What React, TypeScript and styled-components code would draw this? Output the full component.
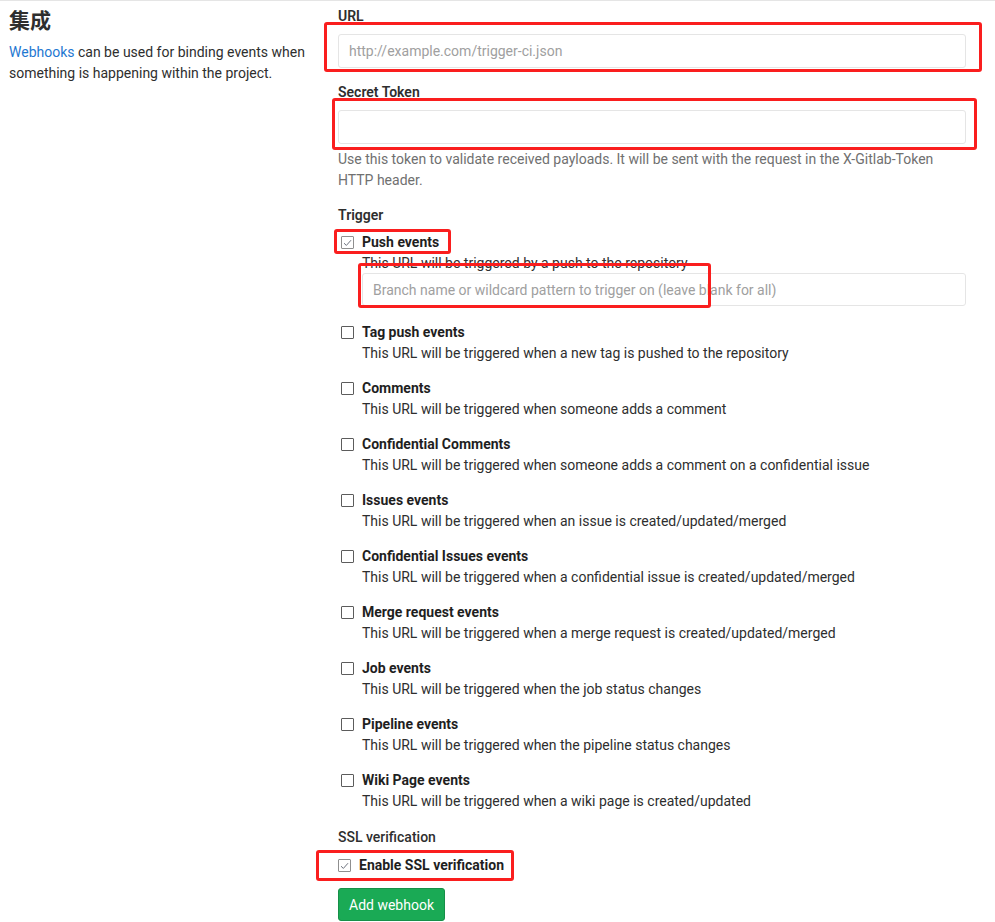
import styled, { createGlobalStyle } from 'styled-components';

const GlobalStyle = createGlobalStyle`
  body {
    margin: 0;
    background: #fff;
    font-family: Roboto, "Noto Sans CJK SC", sans-serif;
    font-size: 14px;
    color: #2e2e2e;
  }
`;

const Page = styled.div`
  display: grid;
  grid-template-columns: 311px 628px;
  column-gap: 18px;
  padding: 0 0 0 9px;
  border-top: 1px solid #e5e5e5;
  height: 921px;
  overflow: hidden;
`;

const Intro = styled.div`
  padding-top: 4px;
`;

const Title = styled.h4`
  margin: 0 0 9px;
  font-size: 21px;
  line-height: 28px;
  font-weight: 700;
  font-family: "Noto Sans CJK SC", sans-serif;
  color: #2e2e2e;
`;

const Lead = styled.p`
  margin: 0;
  line-height: 21px;
  color: #2e2e2e;
`;

const Link = styled.a`
  color: #1f78d1;
  text-decoration: none;
`;

const Form = styled.div`
  display: flex;
  flex-direction: column;
  padding-top: 5px;
`;

const Group = styled.div`
  margin-bottom: 14px;
`;

const Label = styled.div<{ $weight?: number; $gap?: number }>`
  font-weight: ${p => p.$weight ?? 600};
  line-height: 20px;
  margin-bottom: ${p => p.$gap ?? 8}px;
`;

const Field = styled.div`
  position: relative;
`;

const Input = styled.input<{ $tall?: boolean }>`
  display: block;
  box-sizing: border-box;
  width: 100%;
  height: ${p => (p.$tall ? 34 : 33)}px;
  padding: 6px 10px;
  border: 1px solid #e5e5e5;
  border-radius: 3px;
  font-family: inherit;
  font-size: 14px;
  color: #2e2e2e;
  background: #fff;
  outline: none;
  &::placeholder {
    color: #a0a0a0;
  }
`;

const Help = styled.p`
  margin: 5px 0 0;
  line-height: 21px;
  color: #707070;
`;

const Highlight = styled.span<{ $top: number; $left: number; $w: number; $h: number }>`
  position: absolute;
  top: ${p => p.$top}px;
  left: ${p => p.$left}px;
  width: ${p => p.$w}px;
  height: ${p => p.$h}px;
  box-sizing: border-box;
  border: 3px solid #fa1e1e;
  border-radius: 3px;
  pointer-events: none;
`;

const Option = styled.div<{ $after?: number }>`
  margin-bottom: ${p => p.$after ?? 14}px;
`;

const OptionRow = styled.div<{ $shift?: number }>`
  position: relative;
  display: flex;
  align-items: center;
  height: 21px;
  padding-left: ${p => 3 - (p.$shift ?? 0)}px;
`;

const Box = styled.span<{ $checked?: boolean }>`
  box-sizing: border-box;
  width: 13px;
  height: 13px;
  margin-right: 8px;
  border: 1px solid ${p => (p.$checked ? '#8f8f8f' : '#5c5c5c')};
  border-radius: 1px;
  display: flex;
  align-items: center;
  justify-content: center;
  background: #fff;
`;

const OptionTitle = styled.span`
  font-weight: 700;
  line-height: 21px;
  color: #1f1f1f;
`;

const OptionText = styled.div`
  padding-left: 24px;
  line-height: 21px;
  color: #2e2e2e;
`;

const BranchField = styled(Field)`
  margin: -1px 0 0 24px;
`;

const Button = styled.button`
  align-self: flex-start;
  height: 33px;
  padding: 0 10px;
  border: 1px solid #168f48;
  border-radius: 3px;
  background: #1aaa55;
  color: #fff;
  font-family: inherit;
  font-size: 14px;
  line-height: 20px;
`;

const Check = () => (
  <svg width="9" height="8" viewBox="0 0 9 8">
    <path d="M1 4.2 L3.4 6.4 L8 1.2" fill="none" stroke="#6f7480" strokeWidth="1" />
  </svg>
);

const events = [
  ['Tag push events', 'This URL will be triggered when a new tag is pushed to the repository'],
  ['Comments', 'This URL will be triggered when someone adds a comment'],
  ['Confidential Comments', 'This URL will be triggered when someone adds a comment on a confidential issue'],
  ['Issues events', 'This URL will be triggered when an issue is created/updated/merged'],
  ['Confidential Issues events', 'This URL will be triggered when a confidential issue is created/updated/merged'],
  ['Merge request events', 'This URL will be triggered when a merge request is created/updated/merged'],
  ['Job events', 'This URL will be triggered when the job status changes'],
  ['Pipeline events', 'This URL will be triggered when the pipeline status changes'],
  ['Wiki Page events', 'This URL will be triggered when a wiki page is created/updated'],
];

const App = () => {
  return (
    <>
      <GlobalStyle />
      <Page>
        <Intro>
          <Title>集成</Title>
          <Lead>
            <Link href="#">Webhooks</Link> can be used for binding events when something is happening within the project.
          </Lead>
        </Intro>
        <Form>
          <Group>
            <Label>URL</Label>
            <Field>
              <Input $tall placeholder="http://example.com/trigger-ci.json" />
              <Highlight $top={-12} $left={-14} $w={658} $h={50} />
            </Field>
          </Group>
          <Group>
            <Label>Secret Token</Label>
            <Field>
              <Input $tall />
              <Highlight $top={-12} $left={-6} $w={645} $h={52} />
            </Field>
            <Help>
              Use this token to validate received payloads. It will be sent with the request in the X-Gitlab-Token HTTP header.
            </Help>
          </Group>
          <Label $gap={7}>Trigger</Label>
          <Option $after={16}>
            <OptionRow>
              <Box $checked><Check /></Box>
              <OptionTitle>Push events</OptionTitle>
              <Highlight $top={-3} $left={-4} $w={117} $h={25} />
            </OptionRow>
            <OptionText>This URL will be triggered by a push to the repository</OptionText>
            <BranchField>
              <Input placeholder="Branch name or wildcard pattern to trigger on (leave blank for all)" />
              <Highlight $top={-10} $left={-4} $w={353} $h={45} />
            </BranchField>
          </Option>
          {events.map(([title, text], i) => (
            <Option key={title} $after={i === events.length - 1 ? 15 : 14}>
              <OptionRow>
                <Box />
                <OptionTitle>{title}</OptionTitle>
              </OptionRow>
              <OptionText>{text}</OptionText>
            </Option>
          ))}
          <Label $weight={500} $gap={8}>SSL verification</Label>
          <Option $after={12}>
            <OptionRow $shift={3}>
              <Box $checked><Check /></Box>
              <OptionTitle>Enable SSL verification</OptionTitle>
              <Highlight $top={-5} $left={-22} $w={198} $h={31} />
            </OptionRow>
          </Option>
          <Button>Add webhook</Button>
        </Form>
      </Page>
    </>
  );
};

export default App;
